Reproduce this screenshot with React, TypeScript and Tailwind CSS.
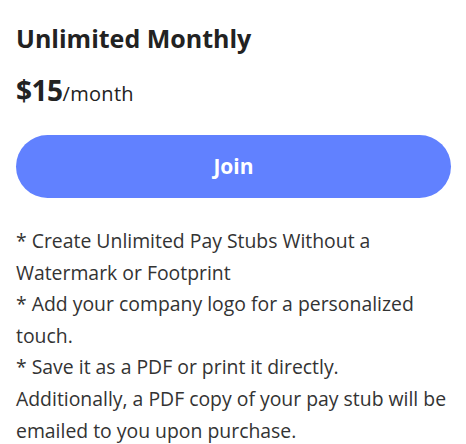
import React from "react";

export default function App() {
  return (
    <div className="w-[466px] h-[444px] bg-white overflow-hidden" style={{ fontFamily: "'Open Sans', 'Noto Sans', sans-serif" }}>
      <div className="pl-4 pt-[20px] w-[466px]">
        <h2 className="text-[25px] leading-[36px] font-bold text-[#222222]">Unlimited Monthly</h2>
        <div className="mt-[16px] flex items-baseline text-[#222222]">
          <span className="text-[28px] font-bold leading-[36px] tracking-[-0.5px]">$15</span>
          <span className="text-[20px] leading-[36px] tracking-[0.3px]">/month</span>
        </div>
        <button className="mt-[23px] w-[435px] h-[63px] rounded-full bg-[#6181ff] text-white text-[21px] font-bold flex items-center justify-center">Join</button>
        <div className="mt-[27px] w-[435px] text-[19.4px] leading-[31.6px] text-[#333333]">
          <p>* Create Unlimited Pay Stubs Without a Watermark or Footprint</p>
          <p>* Add your company logo for a personalized touch.</p>
          <p>* Save it as a PDF or print it directly. Additionally, a PDF copy of your pay stub will be emailed to you upon purchase.</p>
        </div>
      </div>
    </div>
  );
}
